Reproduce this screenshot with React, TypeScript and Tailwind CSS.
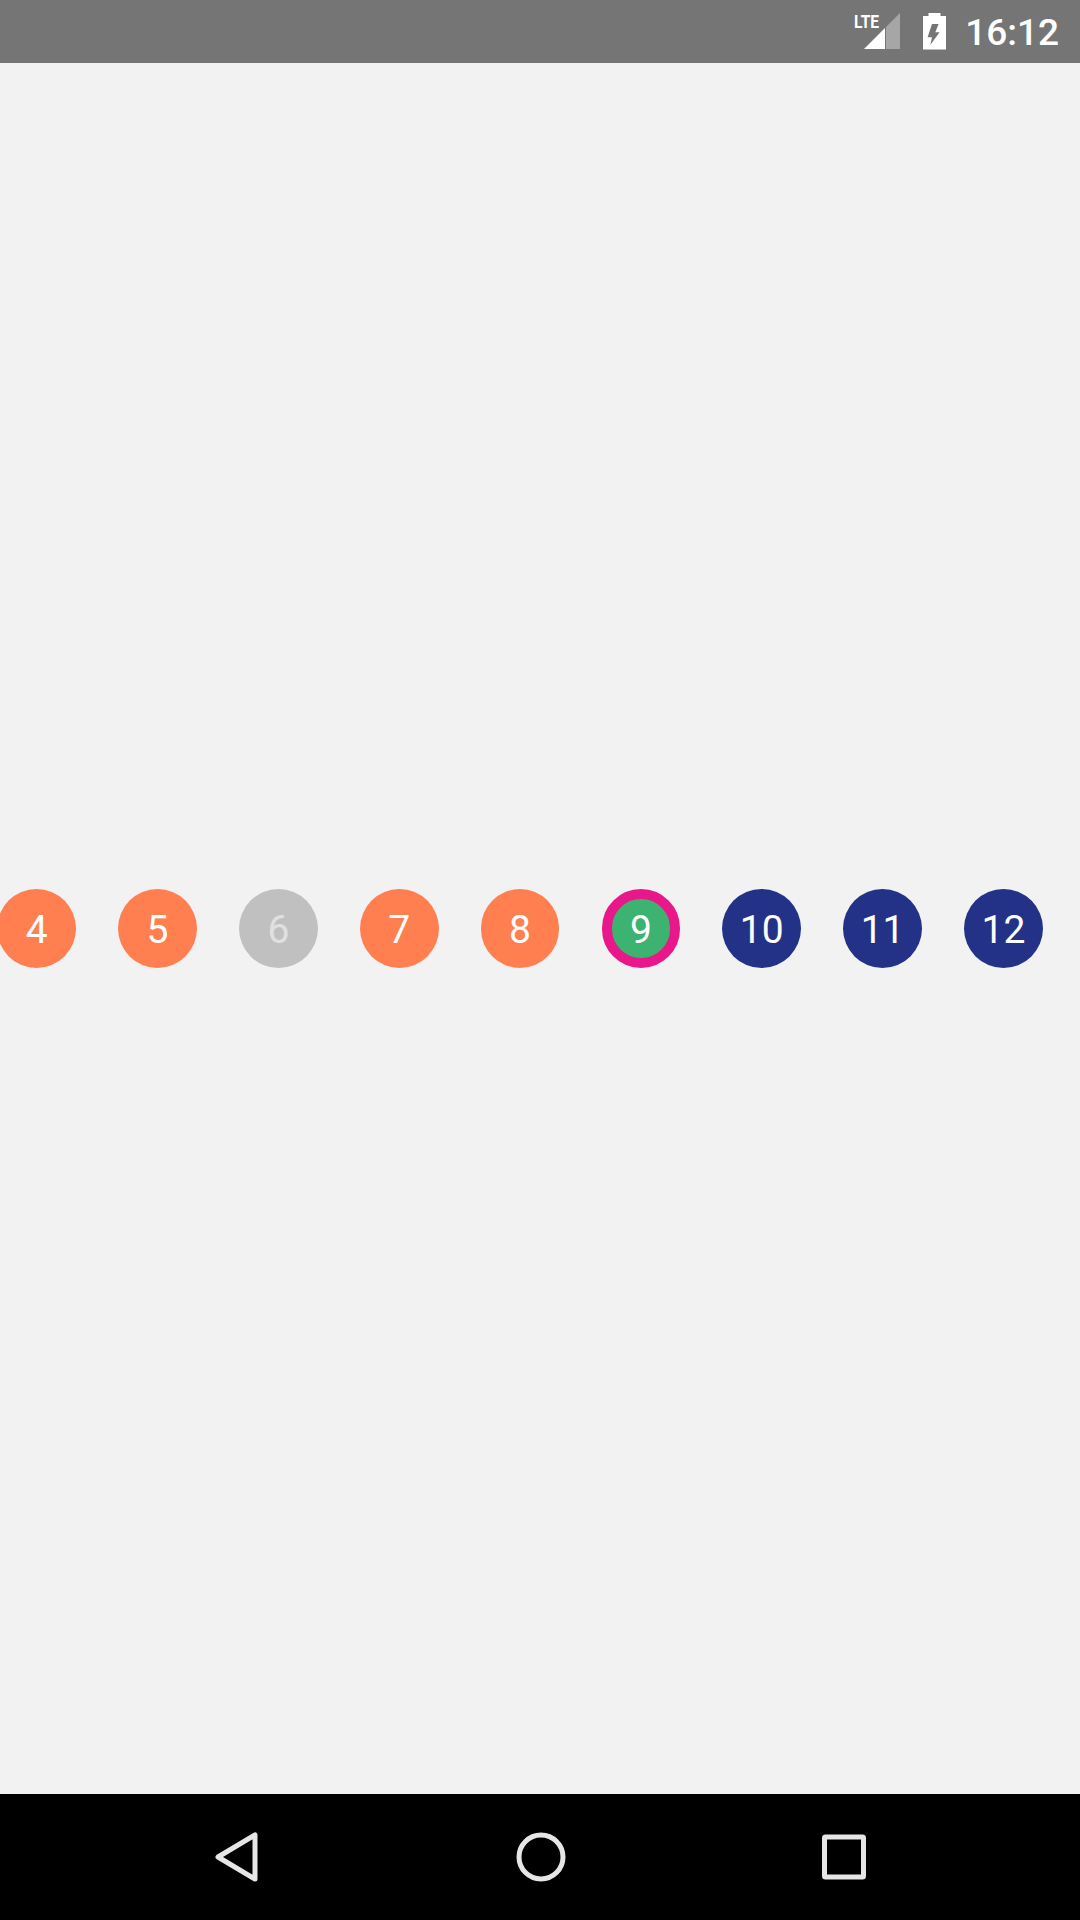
const circles = [
  { label: "4", bg: "bg-[#ff7f50]", text: "text-white" },
  { label: "5", bg: "bg-[#ff7f50]", text: "text-white" },
  { label: "6", bg: "bg-[#c0c0c0]", text: "text-[#e0e0e0]" },
  { label: "7", bg: "bg-[#ff7f50]", text: "text-white" },
  { label: "8", bg: "bg-[#ff7f50]", text: "text-white" },
  { label: "9", bg: "bg-[#3cb371] border-[10.5px] border-[#e8178a]", text: "text-white" },
  { label: "10", bg: "bg-[#233287]", text: "text-white" },
  { label: "11", bg: "bg-[#233287]", text: "text-white" },
  { label: "12", bg: "bg-[#233287]", text: "text-white" },
]

function StatusBar() {
  return (
    <div className="flex h-[63px] shrink-0 items-center justify-end bg-[#757575] pr-[21px]">
      <div className="relative mr-[23px] h-[37px] w-[46px]">
        <svg width="46" height="37" viewBox="0 0 46 37" className="absolute inset-0">
          <path d="M46 0V36H32V14Z" fill="#a6a6a6" />
          <path d="M31 15V36H10Z" fill="#ffffff" />
        </svg>
        <span className="absolute left-0 top-[-1px] origin-left scale-x-[0.82] text-[19px] font-bold leading-[20px] text-white">LTE</span>
      </div>
      <svg width="24" height="38" viewBox="0 0 24 38" className="mr-[18px]">
        <path
          fillRule="evenodd"
          d="M5.5 0H17.5V3H23V36.500H0V3H5.500ZM9 11H15.600L12.300 19.300H16.600L7.300 32L9 24.300H4.600Z"
          fill="#ffffff"
        />
      </svg>
      <span className="pt-[1px] text-[37px] font-medium leading-none text-white">16:12</span>
    </div>
  )
}

function NavBar() {
  return (
    <div className="flex h-[126px] shrink-0 items-center justify-between bg-black pl-[215px] pr-[214px]">
      <svg width="44" height="50" viewBox="0 0 44 50" fill="none" stroke="#e6e6e6" strokeWidth="5" strokeLinejoin="round">
        <path d="M40 3V47L3 25Z" />
      </svg>
      <svg width="50" height="50" viewBox="0 0 50 50" fill="none" stroke="#e6e6e6" strokeWidth="5">
        <circle cx="25" cy="25" r="22" />
      </svg>
      <svg width="44" height="46" viewBox="0 0 44 46" fill="none" stroke="#e6e6e6" strokeWidth="5" strokeLinejoin="round">
        <rect x="2.5" y="3" width="39" height="40" rx="1" />
      </svg>
    </div>
  )
}

export default function App() {
  return (
    <div className="flex h-[1920px] w-[1080px] flex-col overflow-hidden bg-[#f2f2f2] font-['Roboto',sans-serif]">
      <StatusBar />
      <div className="flex flex-1 items-center">
        <div className="ml-[-2.7px] flex gap-[42.1px]">
          {circles.map((c) => (
            <div
              key={c.label}
              className={`flex h-[79px] w-[78.75px] shrink-0 items-center justify-center rounded-full pt-[4px] text-[39px] leading-none ${c.bg} ${c.text}`}
            >
              {c.label}
            </div>
          ))}
        </div>
      </div>
      <NavBar />
    </div>
  )
}
